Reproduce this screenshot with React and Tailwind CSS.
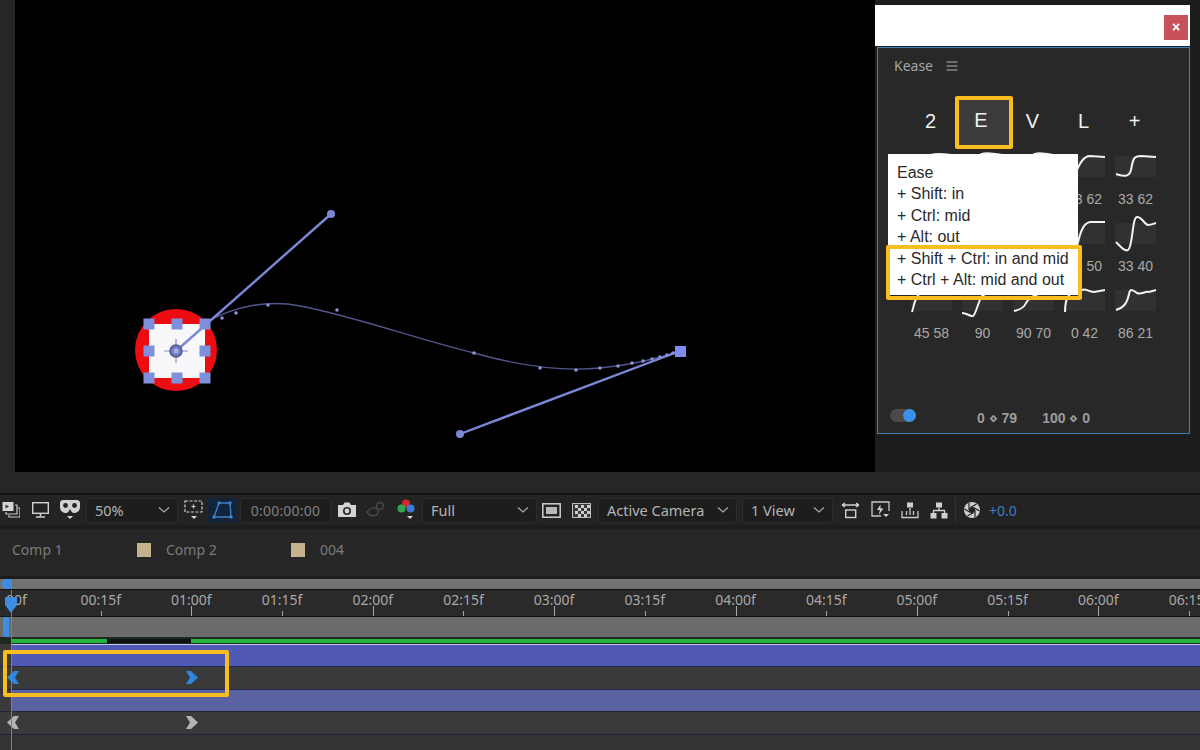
import React from "react";

const Chevron = () => (
  <svg width="14" height="8" viewBox="0 0 14 8" className="shrink-0">
    <path d="M2 1.5 L7 6 L12 1.5" fill="none" stroke="#a8a8a8" strokeWidth="1.3" />
  </svg>
);

const Dropdown = ({ label, className }) => (
  <div className={`h-[25px] flex items-center justify-between rounded-[3px] bg-[#1d1d1d] border border-[#2b2b2b] pl-[8px] pr-1.5 text-[14.5px] text-[#b4b4b4] ${className}`}>
    <span className="pt-[1px]">{label}</span>
    <Chevron />
  </div>
);

const Caret = ({ x, y }) => <path d={`M${x} ${y} h6 l-3 3 z`} fill="#d8d8d8" />;

const curves = [
  [
    ["M1 22 C8 23 12 22 15 10 C17 3 20 0 40 3", "36 62"],
    ["M0 24 C8 24 10 20 14 8 C17 0 24 0 40 3", "33 58"],
    ["M0 24 C10 24 12 18 16 8 C19 0 26 0 40 3", "40 62"],
    ["M10 24 C14 16 18 4 26 4 L41 5", "33 62"],
    ["M1 22 C8 24 14 26 16 18 C18 8 18 4 26 4 L41 5", "33 62"],
  ],
  [
    ["M0 24 C8 30 14 28 16 18 C18 5 24 0 40 5", "33 40"],
    ["M0 24 C8 30 14 28 16 18 C18 5 24 0 40 5", "33 50"],
    ["M0 24 C8 30 14 28 16 18 C18 5 24 0 40 5", "33 45"],
    ["M12 32 C15 18 18 4 26 3 L41 3", "36 50"],
    ["M1 23 C6 28 10 33 13 31 C18 28 17 -2 22 -2 C27 -2 30 6 33 6 C36 6 38 5 41 4", "33 40"],
  ],
  [
    ["M1 26 C3 20 3 14 8 8 C16 3 28 8 41 6", "45 58"],
    ["M0 27 C5 27 9 31 11 30 C14 28 16 16 20 10 C26 5 32 8 41 6", "90"],
    ["M1 25 C6 24 11 22 13 17 C16 12 24 6 41 6", "90 70"],
    ["M1 26 C1 20 2 12 6 8 C10 4 14 6 18 4 C22 2 24 6 30 6 L41 4", "0 42"],
    ["M1 24 C8 22 12 18 14 8 C15 2 18 4 22 7 C26 9 30 5 34 6 L41 4", "86 21"],
  ],
];

const Curve = ({ d, label }) => (
  <div className="flex flex-col items-center">
    <div className="relative w-[41px] h-[36px]">
      <div className="absolute left-0 right-0 top-[4px] h-[21px] bg-[#313131]" />
      <svg width="41" height="36" viewBox="0 0 41 36" className="absolute left-0 top-0 overflow-visible">
        <path d={d} fill="none" stroke="#f2f2f2" strokeWidth="2" />
      </svg>
    </div>
    <div className="h-[22px] leading-[22px] text-[14px] text-[#a8a8a8] font-['Liberation_Sans',sans-serif]">{label}</div>
  </div>
);

const Key = ({ color, flip, className }) => (
  <svg width="13" height="13" viewBox="0 0 13 13" className={className} style={flip ? { transform: "scaleX(-1)" } : undefined}>
    <path d="M0 0 H5 L12 6.5 L5 13 H0 L4 6.5 Z" fill={color} />
  </svg>
);

const rulerLabels = ["00:15f", "01:00f", "01:15f", "02:00f", "02:15f", "03:00f", "03:15f", "04:00f", "04:15f", "05:00f", "05:15f", "06:00f", "06:15f"];

const handles = [
  [149, 324], [177, 324], [205, 324],
  [149, 351], [205, 351],
  [149, 378], [177, 378], [205, 378],
];
const dots = [[222, 318], [236, 313], [268, 305], [337, 310], [474, 353], [540, 368], [576, 370], [600, 368], [618, 366], [632, 363], [643, 361], [652, 359], [660, 357], [667, 355], [673, 353]];

export default function App() {
  return (
    <div className="relative w-[1200px] h-[750px] overflow-hidden bg-[#232323] flex flex-col font-['Noto_Sans',sans-serif]">
      {/* upper area */}
      <div className="flex h-[472px] shrink-0">
        <div className="w-[15px] bg-[#262626]" />
        <div className="w-[860px] bg-black">
          <svg width="860" height="472" viewBox="15 0 860 472">
            <circle cx="176" cy="350" r="41" fill="#ec0d12" />
            <rect x="149" y="324" width="56" height="54" fill="#f8f8fa" />
            <path d="M205 323 C235 305 270 300 300 306 C350 315 420 340 474 353 C520 366 560 372 600 368 C630 365 660 358 680 351" fill="none" stroke="#51568c" strokeWidth="1.4" />
            <line x1="176" y1="351" x2="331" y2="214" stroke="#7c87d6" strokeWidth="2.4" />
            <line x1="680" y1="351" x2="460" y2="434" stroke="#7c87d6" strokeWidth="2.4" />
            {dots.map(([x, y]) => <circle key={x} cx={x} cy={y} r="1.8" fill="#8a92d8" />)}
            {handles.map(([x, y]) => <rect key={`${x}-${y}`} x={x - 5.5} y={y - 5.5} width="11" height="11" fill="#7e8fdc" />)}
            <circle cx="331" cy="214" r="4" fill="#7c87d6" />
            <circle cx="460" cy="434" r="4" fill="#7c87d6" />
            <rect x="675" y="346" width="11" height="11" fill="#7e8cec" />
            <path d="M176 339 V363 M164 351 H188" stroke="#8a90c0" strokeWidth="1.2" />
            <circle cx="176" cy="351" r="6" fill="#6f7bb8" stroke="#4f5a90" strokeWidth="1.5" />
            <circle cx="176" cy="351" r="2.5" fill="#a7aee0" />
          </svg>
        </div>
        <div className="relative w-[325px] bg-[#1d1d1d] pt-[5px]">
          <div className="w-[315px] h-[41px] bg-white flex items-center justify-end pr-[2px] pt-[4px]">
            <div className="w-[24px] h-[25px] bg-[#c8525b] flex items-center justify-center text-white text-[14px] font-bold font-['Liberation_Sans',sans-serif]">×</div>
          </div>
          <div className="relative ml-[2px] mt-[1px] w-[313px] h-[387px] bg-[#282828] border border-[#3f80bb] flex flex-col">
            <div className="flex items-center h-[33px] pl-[16px] mt-[1px] text-[14px] text-[#a6a6a6]">
              <span>Kease</span>
              <svg width="12" height="10" viewBox="0 0 12 10" className="ml-[13px]">
                <path d="M0.5 1 H11.5 M0.5 5 H11.5 M0.5 9 H11.5" stroke="#b4b4b4" strokeWidth="1.2" />
              </svg>
            </div>
            <div className="ml-[27px] mt-[10px] grid grid-cols-[repeat(5,51px)] h-[52px] text-[20px] text-[#f0f0f0] font-['Liberation_Sans',sans-serif]">
              <div className="flex items-center justify-center">2</div>
              <div className="flex items-center justify-center h-[53px] mt-[4px] -ml-[1px] -mr-[6px] pb-[5px] pr-[6px] rounded-[2px] border-[4px] border-[#f9be1e] bg-[#3b3b3b]">E</div>
              <div className="flex items-center justify-center">V</div>
              <div className="flex items-center justify-center">L</div>
              <div className="flex items-center justify-center">+</div>
            </div>
            <div className="ml-[28px] mt-[8px] grid grid-cols-[repeat(5,51px)] auto-rows-[67px]">
              {curves.flat().map(([d, label], i) => <Curve key={i} d={d} label={label} />)}
            </div>
            <div className="absolute left-[12px] right-0 bottom-[8px] flex items-center h-[20px]">
              <div className="relative w-[26px] h-[13px] rounded-full bg-[#4a4a4a]">
                <div className="absolute right-0 top-0 w-[13px] h-[13px] rounded-full bg-[#3a90ea]" />
              </div>
              <div className="ml-[61px] mt-[6px] text-[14px] font-bold text-[#9c9c9c] font-['Liberation_Sans',sans-serif] flex gap-[25px]">
                <span>0 ⋄ 79</span>
                <span>100 ⋄ 0</span>
              </div>
            </div>
          </div>
          {/* tooltip */}
          <div className="absolute left-[13px] top-[154px] w-[190px] h-[141px] bg-white pl-[9px] pt-[7.5px] text-[16px] leading-[21.6px] text-[#2a2a2a] font-['Liberation_Sans',sans-serif] whitespace-nowrap">
            <div>Ease</div>
            <div>+ Shift: in</div>
            <div>+ Ctrl: mid</div>
            <div>+ Alt: out</div>
            <div>+ Shift + Ctrl: in and mid</div>
            <div>+ Ctrl + Alt: mid and out</div>
            <div className="absolute left-[-2px] top-[91px] w-[196px] h-[55px] border-[4px] border-[#f9be1e] rounded-[2px]" />
          </div>
        </div>
      </div>

      {/* band above toolbar */}
      <div className="h-[23px] shrink-0 bg-[#262626] border-b-[2px] border-[#141414]" />

      {/* toolbar */}
      <div className="h-[30px] shrink-0 bg-[#232323] flex items-center pl-[2px] text-[#d0d0d0]">
        <svg width="18" height="18" viewBox="0 0 18 18" className="shrink-0">
          <rect x="0.5" y="1" width="11" height="9" fill="#d4d4d4" />
          <path d="M3.5 3.5 L7 5.5 L3.5 7.5 Z" fill="#333" />
          <path d="M13 4 H15 V13 H4 V11 M16 7 H18 V16 H7 V14" fill="none" stroke="#c8c8c8" strokeWidth="1.2" />
        </svg>
        <svg width="17" height="16" viewBox="0 0 17 16" className="ml-[12px] shrink-0">
          <rect x="0.7" y="0.7" width="15.6" height="10.6" fill="none" stroke="#d0d0d0" strokeWidth="1.4" />
          <path d="M8.5 12 V14 M4 15 H13" stroke="#d0d0d0" strokeWidth="1.5" />
        </svg>
        <svg width="22" height="22" viewBox="0 0 22 22" className="ml-[10px] shrink-0">
          <path d="M1 4 C1 1.5 3 1 6 1 H16 C19 1 21 1.5 21 4 V8 C21 12 18 14 15 14 C13 14 12 12 11 10 C10 12 9 14 7 14 C4 14 1 12 1 8 Z" fill="#d2d2d2" />
          <circle cx="6.5" cy="6.5" r="2.4" fill="#232323" />
          <circle cx="15.5" cy="6.5" r="2.4" fill="#232323" />
          <Caret x={8} y={17} />
        </svg>
        <Dropdown label="50%" className="ml-[5px] w-[92px]" />
        <svg width="20" height="24" viewBox="0 0 20 24" className="ml-[6px] shrink-0">
          <rect x="1" y="3" width="17" height="11" fill="none" stroke="#cfcfcf" strokeWidth="1.2" strokeDasharray="3 1.5" />
          <path d="M9.5 6.5 V10.5 M7.5 8.5 H11.5" stroke="#cfcfcf" strokeWidth="1.2" />
          <Caret x={7} y={18} />
        </svg>
        <div className="ml-[4px] w-[29px] h-[25px] rounded-[2px] bg-[#13233a] flex items-center justify-center shrink-0">
          <svg width="21" height="19" viewBox="0 0 21 19">
            <path d="M7 2 H18 L19 16 H2 Z" fill="none" stroke="#3f82c8" strokeWidth="1.4" />
            <g fill="#3f82c8">
              <rect x="5.5" y="0.5" width="3" height="3" />
              <rect x="16.5" y="0.5" width="3" height="3" />
              <rect x="0.5" y="14.5" width="3" height="3" />
              <rect x="17.5" y="14.5" width="3" height="3" />
            </g>
          </svg>
        </div>
        <div className="ml-[3px] w-[91px] h-[25px] rounded-[3px] bg-[#1d1d1d] border border-[#2b2b2b] flex items-center justify-center text-[14px] text-[#808080] tracking-[0.2px]">0:00:00:00</div>
        <svg width="20" height="16" viewBox="0 0 20 16" className="ml-[6px] shrink-0">
          <path d="M1 3 H6 L7.5 0.5 H12.5 L14 3 H19 V15 H1 Z" fill="#d4d4d4" />
          <circle cx="10" cy="9" r="4" fill="#232323" />
          <circle cx="10" cy="9" r="2.4" fill="#d4d4d4" />
        </svg>
        <svg width="20" height="18" viewBox="0 0 20 18" className="ml-[9px] shrink-0">
          <path d="M1 11 C4 7 8 6 11 8 C13 10 13 13 9 14.5 C6 15.5 3 14 1 11 Z" fill="none" stroke="#484848" strokeWidth="1.5" />
          <circle cx="14" cy="5" r="3.5" fill="none" stroke="#484848" strokeWidth="1.5" />
        </svg>
        <svg width="18" height="22" viewBox="0 0 18 22" className="ml-[11px] shrink-0">
          <circle cx="9" cy="4.5" r="4" fill="#d8262c" />
          <circle cx="4.5" cy="9.5" r="4" fill="#30a84a" />
          <circle cx="13.5" cy="9.5" r="4" fill="#3c78d8" />
          <Caret x={10} y={17} />
        </svg>
        <Dropdown label="Full" className="ml-[7px] w-[115px]" />
        <svg width="19" height="15" viewBox="0 0 19 15" className="ml-[5px] shrink-0">
          <rect x="0.8" y="0.8" width="17.4" height="13.4" fill="none" stroke="#d0d0d0" strokeWidth="1.5" />
          <rect x="4" y="4" width="11" height="7" fill="#b8b8b8" />
        </svg>
        <svg width="19" height="15" viewBox="0 0 19 15" className="ml-[11px] shrink-0">
          <rect x="0.5" y="0.5" width="18" height="14" fill="#3a3a3a" stroke="#bcbcbc" />
          <g fill="#cfcfcf">
            <rect x="3" y="2" width="3" height="3" /><rect x="9" y="2" width="3" height="3" /><rect x="15" y="2" width="3" height="3" />
            <rect x="6" y="5" width="3" height="3" /><rect x="12" y="5" width="3" height="3" />
            <rect x="3" y="8" width="3" height="3" /><rect x="9" y="8" width="3" height="3" /><rect x="15" y="8" width="3" height="3" />
            <rect x="6" y="11" width="3" height="3" /><rect x="12" y="11" width="3" height="3" />
          </g>
        </svg>
        <Dropdown label="Active Camera" className="ml-[7px] w-[139px]" />
        <Dropdown label="1 View" className="ml-[5px] w-[91px]" />
        <svg width="19" height="18" viewBox="0 0 19 18" className="ml-[8px] shrink-0">
          <path d="M1 4 H18 M1 4 L4 2 M1 4 L4 6 M18 4 L15 2 M18 4 L15 6" fill="none" stroke="#d0d0d0" strokeWidth="1.3" />
          <rect x="4.7" y="9" width="10" height="7.5" fill="none" stroke="#d0d0d0" strokeWidth="1.4" />
        </svg>
        <svg width="19" height="19" viewBox="0 0 19 19" className="ml-[11px] shrink-0">
          <path d="M10 15 H1 V1 H18 V10" fill="none" stroke="#c8c8c8" strokeWidth="1.3" />
          <path d="M9.5 3.5 L6 9 H9 L7.5 14 L12.5 7.5 H9.5 Z" fill="#d0d0d0" />
          <path d="M12 13 h6 l-3 3 z" fill="#d0d0d0" />
        </svg>
        <svg width="18" height="17" viewBox="0 0 18 17" className="ml-[11px] shrink-0">
          <rect x="6" y="0.5" width="6" height="5" fill="#d0d0d0" />
          <path d="M1 9 V15.5 H17 V9 M5.5 9 V13 M9 6 V13 M12.5 9 V13" fill="none" stroke="#c8c8c8" strokeWidth="1.3" />
        </svg>
        <svg width="18" height="17" viewBox="0 0 18 17" className="ml-[11px] shrink-0">
          <rect x="6" y="0.5" width="6" height="5" fill="#d0d0d0" />
          <rect x="0.5" y="11" width="6" height="5.5" fill="#d0d0d0" />
          <rect x="11.5" y="11" width="6" height="5.5" fill="#d0d0d0" />
          <path d="M9 5.5 V8.5 M3.5 11 V8.5 H14.5 V11" fill="none" stroke="#d0d0d0" strokeWidth="1.3" />
        </svg>
        <div className="ml-[7px] w-px h-[24px] bg-[#333333] shrink-0" />
        <svg width="16" height="16" viewBox="0 0 16 16" className="ml-[8px] shrink-0">
          <circle cx="8" cy="8" r="8" fill="#cfcfcf" />
          <circle cx="8" cy="8" r="3" fill="#232323" />
          <g stroke="#232323" strokeWidth="1.2">
            <line x1="11" y1="8" x2="11" y2="15" />
            <line x1="11" y1="8" x2="11" y2="15" transform="rotate(60 8 8)" />
            <line x1="11" y1="8" x2="11" y2="15" transform="rotate(120 8 8)" />
            <line x1="11" y1="8" x2="11" y2="15" transform="rotate(180 8 8)" />
            <line x1="11" y1="8" x2="11" y2="15" transform="rotate(240 8 8)" />
            <line x1="11" y1="8" x2="11" y2="15" transform="rotate(300 8 8)" />
          </g>
        </svg>
        <span className="ml-[9px] text-[14px] text-[#3d7cc4]">+0.0</span>
      </div>

      {/* tabs */}
      <div className="h-[51px] shrink-0 bg-[#262626] border-t-[4px] border-[#1d1d1d] flex items-center pl-[12px] pb-[6px] text-[14px] text-[#7c7c7c]">
        <span className="w-[125px]">Comp 1</span>
        <span className="w-[14px] h-[14px] bg-[#c4b28e]" />
        <span className="ml-[15px] w-[125px]">Comp 2</span>
        <span className="w-[14px] h-[14px] bg-[#c4b28e]" />
        <span className="ml-[15px]">004</span>
      </div>

      {/* timeline */}
      <div className="relative flex-1 flex flex-col bg-[#333333] min-h-0">
        <div className="h-[3px] shrink-0 bg-[#1c1c1c]" />
        <div className="h-[10px] shrink-0 bg-[#737373] flex">
          <div className="w-[10px] ml-[2px] bg-[#3d8ee0] rounded-l-full" />
        </div>
        <div className="relative h-[28px] shrink-0 bg-[#2a2a2a] border-y border-[#101010] flex pl-[10px] text-[14px] leading-[18px] text-[#a8a8a8]">
          <span className="absolute left-[6px] top-[1px]">00f</span>
          {rulerLabels.map((t, i) => (
            <div key={t} className="relative w-[90.7px] shrink-0">
              <span className="absolute left-[90.7px] -translate-x-1/2 top-[1px] whitespace-nowrap">{t}</span>
              <span className={`absolute left-[90.7px] bottom-0 w-px ${i % 2 ? "h-[10px]" : "h-[5px]"} bg-[#a8a8a8]`} />
            </div>
          ))}
        </div>
        <div className="h-[20px] shrink-0 bg-[#6b6b6b] flex">
          <div className="w-[6px] ml-[3px] bg-[#3d8ee0] rounded-l-[3px]" />
        </div>
        <div className="h-[7px] shrink-0 bg-[#1f2a1f] flex items-center pl-[11px]">
          <div className="w-[96px] h-[4px] bg-[#22b63e]" />
          <div className="w-[84px] h-[4px] bg-[#111111]" />
          <div className="flex-1 h-[4px] bg-[#22b63e]" />
        </div>
        <div className="h-[22px] shrink-0 bg-[#3a3a3a] pl-[11px]">
          <div className="h-full bg-[#5059b6] border-t border-[#c2c8ee]" />
        </div>
        <div className="relative h-[24px] shrink-0 bg-[#3a3a3a] border-y border-[#20284e]">
          <Key color="#2f86dc" flip className="absolute left-[6px] top-[4px]" />
          <Key color="#2f86dc" className="absolute left-[186px] top-[4px]" />
        </div>
        <div className="h-[21px] shrink-0 bg-[#3a3a3a] pl-[11px]">
          <div className="h-full bg-[#5a62a2]" />
        </div>
        <div className="relative h-[24px] shrink-0 bg-[#3a3a3a] border-y border-[#23233a]">
          <Key color="#b4b4b4" flip className="absolute left-[6px] top-[4px]" />
          <Key color="#b4b4b4" className="absolute left-[186px] top-[4px]" />
        </div>
        <div className="flex-1 bg-[#333333]" />

        {/* playhead */}
        <div className="absolute left-[11px] top-[14px] bottom-0 w-px bg-[#3d8ee0]" />
        <svg width="14" height="18" viewBox="0 0 14 18" className="absolute left-[4px] top-[20px]">
          <path d="M1 1 H13 V9 L7 17 L1 9 Z" fill="#3d8ee0" />
        </svg>
        {/* highlight */}
        <div className="absolute left-[3px] top-[74px] w-[226px] h-[47px] border-[4px] border-[#f9be1e] rounded-[2px]" />
      </div>
    </div>
  );
}
